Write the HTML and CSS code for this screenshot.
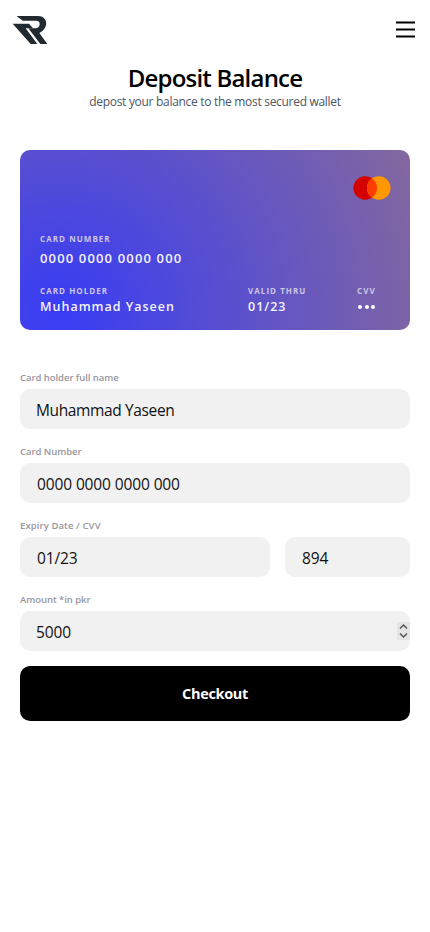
FILE: index.html
```html
<!DOCTYPE html>
<html lang="en">
<head>
<meta charset="utf-8">
<meta name="viewport" content="width=device-width, initial-scale=1">
<title>Deposit Balance</title>
<link rel="stylesheet" href="styles.css">
</head>
<body>
<header class="topbar">
  <svg class="logo" viewBox="36 30 108 90" aria-label="Logo"><path d="M50 33H114C136 33 145 53 134 70Q129 79 118 84L142 117H121L93 80L85 70H106C122 70 124 47 109 47H68Z"/><path d="M38 56H87L99 70H77L112 117H92Z"/></svg>
  <svg class="menu" viewBox="0 0 20 18" aria-label="Menu"><path d="M0 2.5H19M0 9.5H19M0 16.5H19"/></svg>
</header>
<main>
  <h1 class="title">Deposit Balance</h1>
  <p class="subtitle">depost your balance to the most secured wallet</p>
  <section class="card">
    <svg class="brand" viewBox="0 0 38 24"><circle cx="12.2" cy="12" r="11.8" fill="#d50000"/><circle cx="25.8" cy="12" r="11.8" fill="#ff9800"/><path d="M19 2.35A11.8 11.8 0 0 1 19 21.65A11.8 11.8 0 0 1 19 2.35Z" fill="#ff3d00"/></svg>
    <div class="number">
      <div class="caption">CARD NUMBER</div>
      <div class="value digits">0000 0000 0000 000</div>
    </div>
    <div class="details">
      <div class="holder"><div class="caption">CARD HOLDER</div><div class="value">Muhammad Yaseen</div></div>
      <div class="thru"><div class="caption">VALID THRU</div><div class="value">01/23</div></div>
      <div class="cvv"><div class="caption">CVV</div><div class="dots"><i></i><i></i><i></i></div></div>
    </div>
  </section>
  <form class="form">
    <label class="label">Card holder full name</label>
    <div class="field"><span class="t-name">Muhammad Yaseen</span></div>
    <label class="label">Card Number</label>
    <div class="field inset"><span class="t-num">0000 0000 0000 000</span></div>
    <label class="label l-expiry">Expiry Date / CVV</label>
    <div class="row">
      <div class="field inset"><span class="t-num">01/23</span></div>
      <div class="field inset"><span class="t-num">894</span></div>
    </div>
    <label class="label">Amount *in pkr</label>
    <div class="field"><span class="t-num">5000</span><svg class="spinner" viewBox="0 0 13 18"><path d="M3 6.5L6.5 3L10 6.5M3 11.5L6.5 15L10 11.5"/></svg></div>
    <button class="checkout" type="button">Checkout</button>
  </form>
</main>
</body>
</html>
```
FILE: styles.css
```css
* { box-sizing: border-box; }
body { margin: 0; background: #fff; color: #000; font-family: "Open Sans", "Noto Sans", sans-serif; }
.topbar { height: 60px; padding: 15px 14px 0 12px; display: flex; justify-content: space-between; }
.logo { width: 36px; height: 30px; fill: #202a30; }
.menu { width: 20px; height: 18px; margin-top: 5px; stroke: #000; stroke-width: 2; fill: none; }
.title { margin: 2px 0 0; height: 32px; line-height: 32px; text-align: center; font-size: 24px; font-weight: 600; letter-spacing: -0.8px; white-space: nowrap; }
.subtitle { margin: 0; height: 16px; line-height: 16px; text-align: center; font-size: 12px; color: #4b5563; letter-spacing: -0.3px; white-space: nowrap; }
.card { margin: 40px 20px 0; height: 180px; border-radius: 10px; padding: 26px 19px 0 20px; color: #fff; background: radial-gradient(circle at 10% 90%, #383cf5 0%, #84689e 100%); display: flex; flex-direction: column; }
.brand { width: 38px; height: 24px; align-self: flex-end; }
.number { margin-top: 33px; }
.caption { height: 12px; line-height: 12px; font-size: 8px; font-weight: 700; letter-spacing: 1.05px; color: #cbc6e4; white-space: nowrap; }
.value { font-size: 12.5px; line-height: 18px; font-weight: 600; letter-spacing: 1px; color: #f4f3ff; white-space: nowrap; }
.digits { font-size: 13px; letter-spacing: 1.15px; }
.number .value { margin-top: 4px; }
.details { margin-top: 18px; display: grid; grid-template-columns: 208px 109px 1fr; }
.dots { display: flex; gap: 2.7px; padding: 8px 0 0 1px; }
.dots i { width: 4px; height: 4px; border-radius: 50%; background: #fff; }
.details .value { margin-top: 1px; }
.form { margin: 40px 20px 0; display: flex; flex-direction: column; }
.label { height: 15px; line-height: 15px; margin-bottom: 4px; font-size: 9.5px; font-weight: 600; color: #9696a0; letter-spacing: -0.05px; white-space: nowrap; }
.l-expiry { letter-spacing: 0.1px; }
.field { height: 40px; margin-bottom: 15px; border-radius: 10px; background: #f1f1f1; padding-left: 16px; display: flex; align-items: center; justify-content: space-between; font-size: 15.5px; line-height: 22px; white-space: nowrap; padding-top: 2px; overflow: hidden; color: #111; }
.inset { padding-left: 17px; }
.row { display: grid; grid-template-columns: 250px 125px; gap: 15px; }
.t-name { letter-spacing: -0.37px; }
.t-num { letter-spacing: -0.12px; }
.spinner { width: 13px; height: 18px; margin-top: -2px; background: #e5e5e5; fill: none; stroke: #555; stroke-width: 1.5; }
.checkout { height: 55px; border: 0; border-radius: 10px; background: #000; color: #fff; font: 700 14.5px/20px "Open Sans", sans-serif; letter-spacing: -0.35px; }
```
